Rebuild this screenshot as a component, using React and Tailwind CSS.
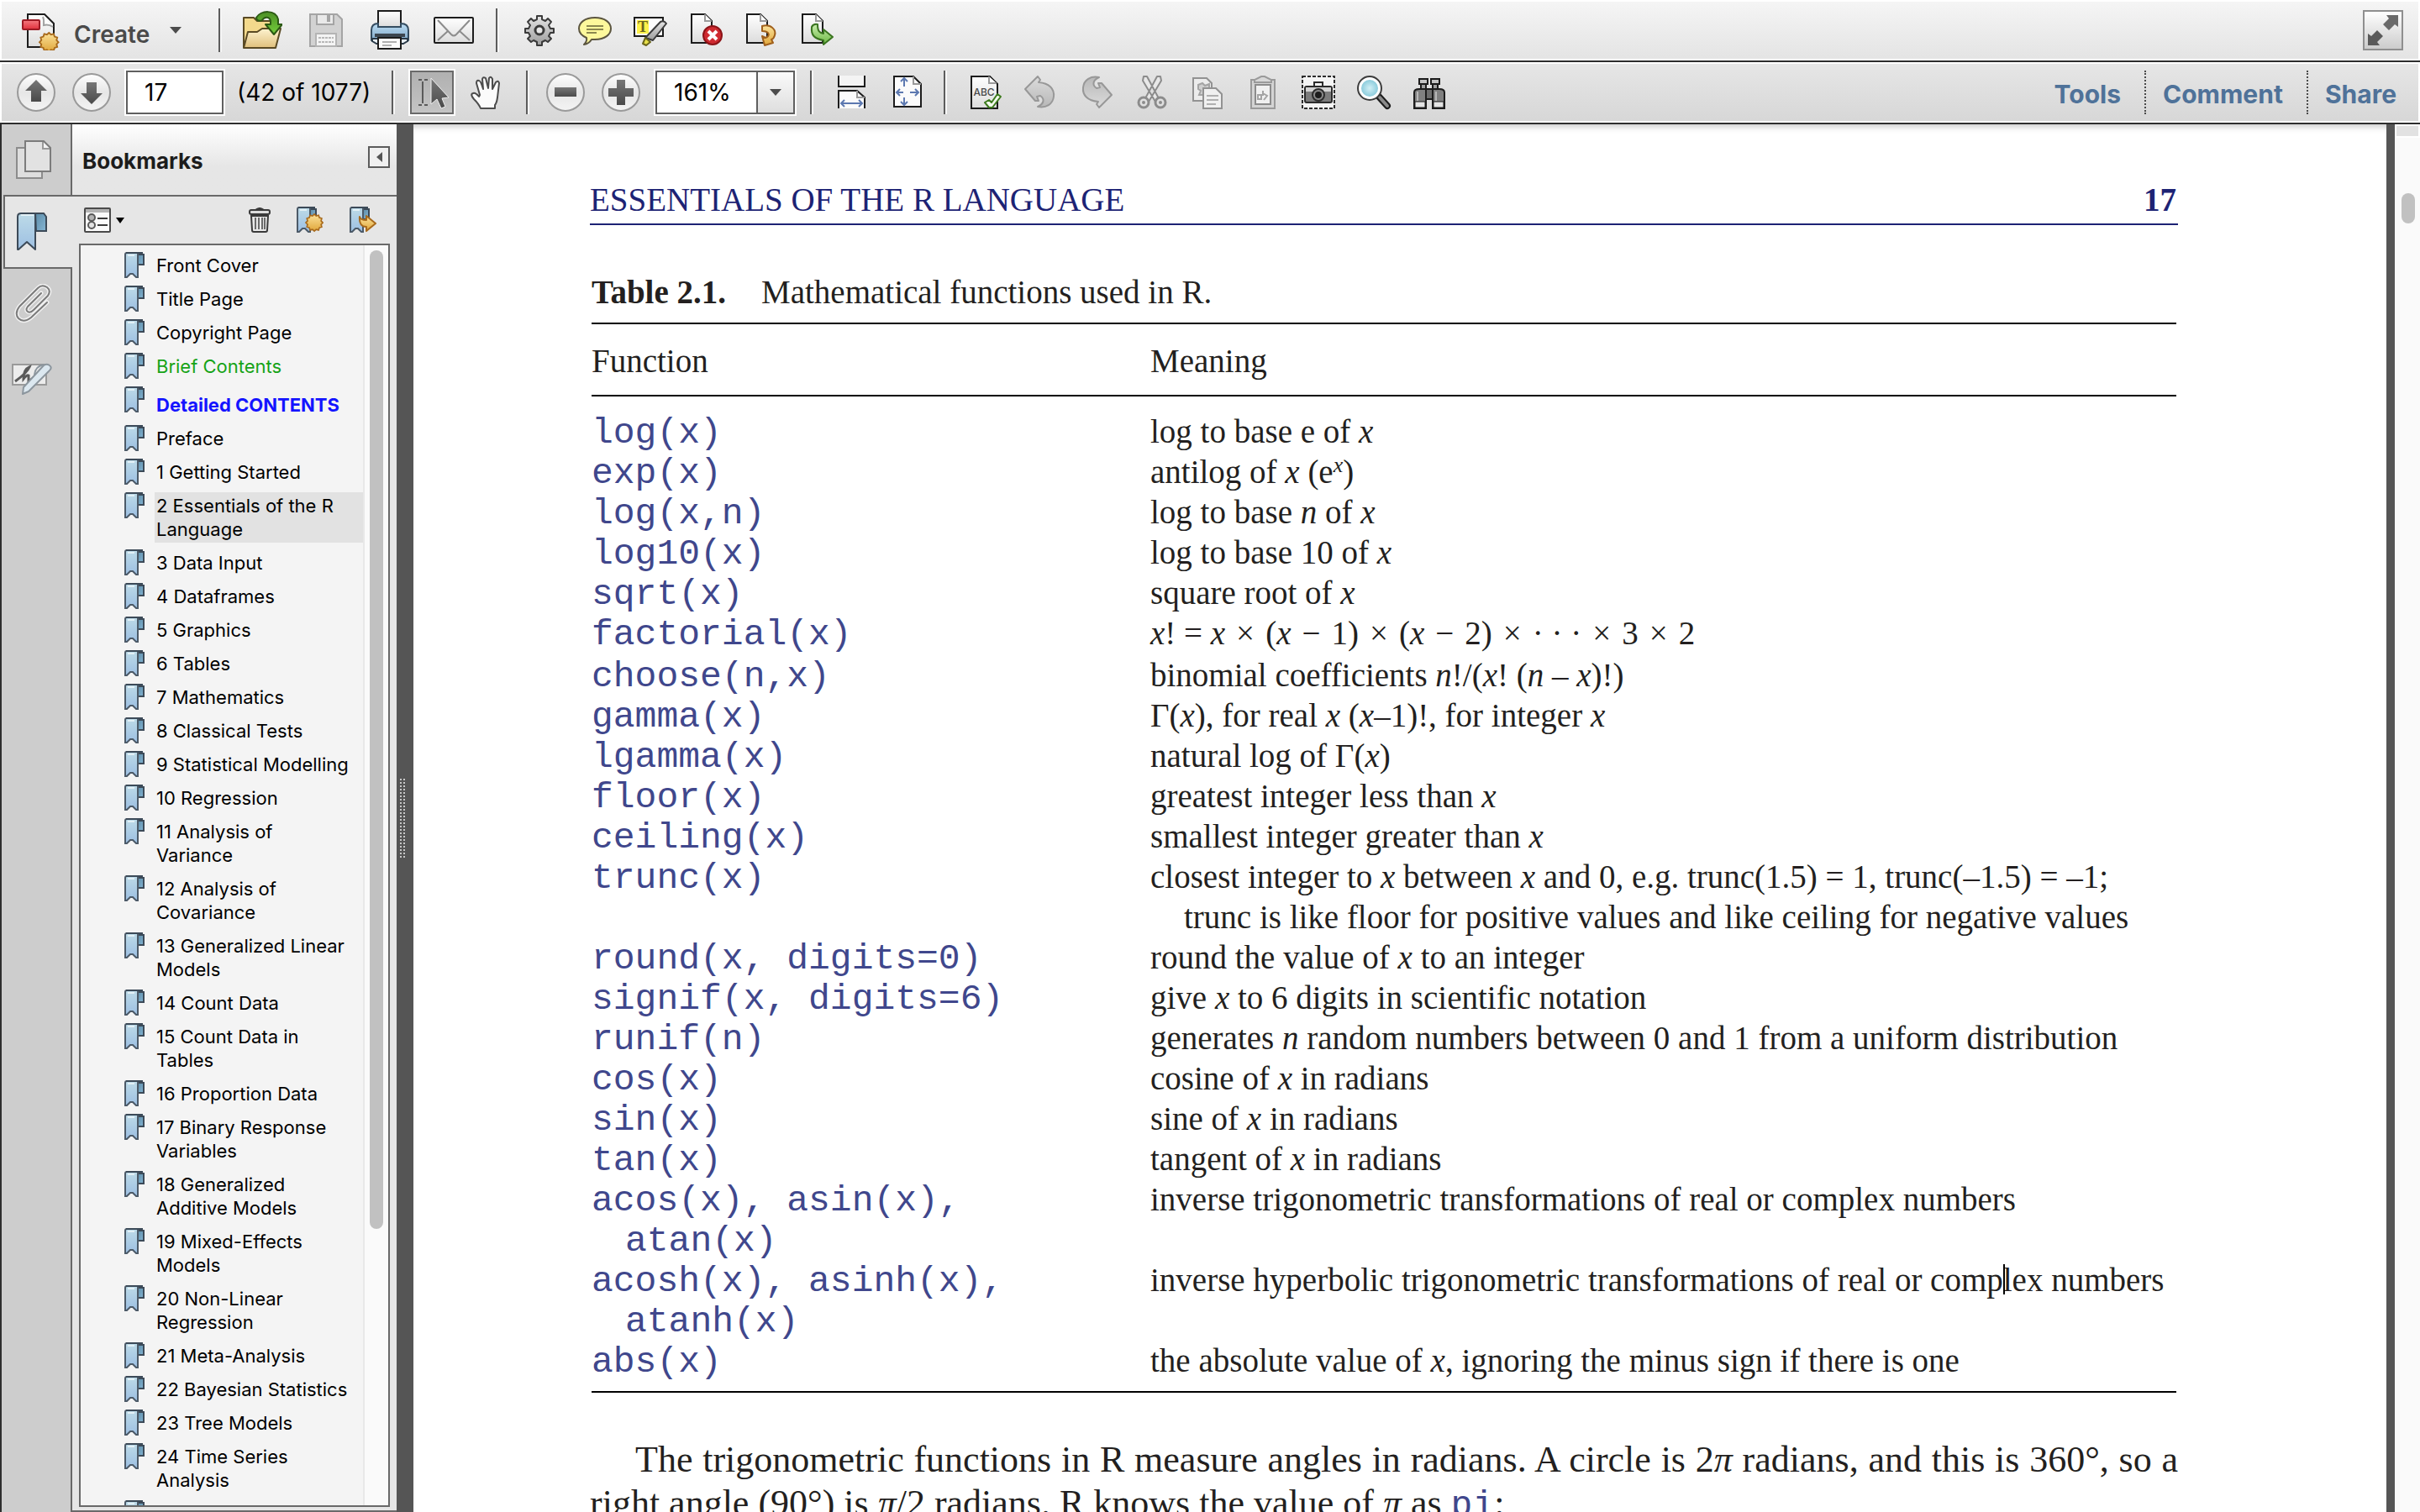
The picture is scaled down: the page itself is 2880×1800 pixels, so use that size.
import React from "react";

function Defs() {
  return (
    <svg width="0" height="0" className="absolute" aria-hidden="true">
      <defs>
        <linearGradient id="paper" x1="0" y1="0" x2="0" y2="1">
          <stop offset="0" stopColor="#ffffff" />
          <stop offset="1" stopColor="#dcdcdc" />
        </linearGradient>
        <linearGradient id="gold" x1="0" y1="0" x2="0" y2="1">
          <stop offset="0" stopColor="#fbe29a" />
          <stop offset="1" stopColor="#e0a63a" />
        </linearGradient>
        <linearGradient id="folder" x1="0" y1="0" x2="0" y2="1">
          <stop offset="0" stopColor="#fdf3d0" />
          <stop offset="1" stopColor="#e0c07c" />
        </linearGradient>
        <linearGradient id="green" x1="0" y1="0" x2="0" y2="1">
          <stop offset="0" stopColor="#4c8f24" />
          <stop offset="1" stopColor="#74cf3c" />
        </linearGradient>
        <linearGradient id="lime" x1="0" y1="0" x2="0" y2="1">
          <stop offset="0" stopColor="#c8ecae" />
          <stop offset="1" stopColor="#6cb842" />
        </linearGradient>
        <linearGradient id="blue" x1="0" y1="0" x2="0" y2="1">
          <stop offset="0" stopColor="#bddbe8" />
          <stop offset="1" stopColor="#9dbfe2" />
        </linearGradient>
        <linearGradient id="fold" x1="0" y1="0" x2="1" y2="1">
          <stop offset="0" stopColor="#5c8ca8" />
          <stop offset="1" stopColor="#86b6d4" />
        </linearGradient>
        <linearGradient id="knob" x1="0" y1="0" x2="0" y2="1">
          <stop offset="0" stopColor="#ffffff" />
          <stop offset="0.5" stopColor="#e6e6e6" />
          <stop offset="1" stopColor="#f4f4f4" />
        </linearGradient>
        <linearGradient id="ink" x1="0" y1="0" x2="0" y2="1">
          <stop offset="0" stopColor="#777777" />
          <stop offset="1" stopColor="#4a4a4a" />
        </linearGradient>
        <linearGradient id="steel" x1="0" y1="0" x2="0" y2="1">
          <stop offset="0" stopColor="#e4e4e4" />
          <stop offset="1" stopColor="#9c9c9c" />
        </linearGradient>
        <linearGradient id="mute" x1="0" y1="0" x2="0" y2="1">
          <stop offset="0" stopColor="#dcdcdc" />
          <stop offset="1" stopColor="#b8b8b8" />
        </linearGradient>
        <linearGradient id="ribbon" x1="0" y1="0" x2="0" y2="1">
          <stop offset="0" stopColor="#bcdcf2" />
          <stop offset="1" stopColor="#7ba4c6" />
        </linearGradient>
        <linearGradient id="red" x1="0" y1="0" x2="0" y2="1">
          <stop offset="0" stopColor="#f47a80" />
          <stop offset="1" stopColor="#e0303c" />
        </linearGradient>
        <radialGradient id="lens">
          <stop offset="0" stopColor="#d2f0f6" />
          <stop offset="1" stopColor="#8cccdc" />
        </radialGradient>
      </defs>
    </svg>
  );
}

function Icon({ children, size = 48 }) {
  return (
    <svg width={size} height={size} viewBox={`0 0 ${size} ${size}`} fill="none" aria-hidden="true" className="shrink-0">
      {children}
    </svg>
  );
}

const STAR =
  "M12 0l2.6 2.4 3.4-.9 1.1 3.4 3.4 1.1-.9 3.4L24 12l-2.4 2.6.9 3.4-3.4 1.1-1.1 3.4-3.4-.9L12 24l-2.6-2.4-3.4.9-1.1-3.4L1.5 18l.9-3.4L0 12l2.4-2.6L1.5 6l3.4-1.1L6 1.5l3.4.9z";

const SmallPage = () => (
  <>
    <path d="M7 5H23L31 13V39H7z" fill="url(#paper)" stroke="#1c1c1c" strokeWidth="2" />
    <path d="M23 5V13H31" fill="#fff" stroke="#9a9a9a" strokeWidth="2" />
  </>
);

const CreateIcon = () => (
  <Icon>
    <path d="M9 5H29L40 16V44H9z" fill="url(#paper)" stroke="#1c1c1c" strokeWidth="2" />
    <path d="M27 8C29 12 28 16 28 18C32 17 36 18 39 20" fill="#fff" stroke="#a0a0a0" strokeWidth="2" />
    <rect x="3" y="12" width="20" height="11" rx="1" fill="url(#red)" stroke="#9c1a24" strokeWidth="2" />
    <path transform="translate(23 27) scale(.94)" d={STAR} fill="url(#gold)" stroke="#a86a1c" strokeWidth="2" />
  </Icon>
);

const OpenIcon = () => (
  <Icon>
    <path d="M2 9H14L18 13H34V44H2z" fill="#f3d98c" stroke="#5a4a24" strokeWidth="2" strokeLinejoin="round" />
    <path d="M2 45L7 26H18L24 22H46L40 45z" fill="url(#folder)" stroke="#5a4a24" strokeWidth="2" strokeLinejoin="round" />
    <path d="M17 9C22 0 40 -1 43 11V17H48L38 29L28 17H34V13C33 8 27 7 24 12C21 14 17 12 17 9z" fill="url(#green)" stroke="#2c5a14" strokeWidth="2" strokeLinejoin="round" />
  </Icon>
);

const SaveIcon = () => (
  <Icon>
    <path d="M5 5H37L43 11V43H5z" fill="#d2d2d2" stroke="#a4a4a4" strokeWidth="2" />
    <path d="M13 5H33V17H13z" fill="#e9e9e9" stroke="#a4a4a4" strokeWidth="2" />
    <rect x="25" y="6" width="4" height="8" fill="#a4a4a4" />
    <path d="M12 43V28H36V43z" fill="#f4f4f4" stroke="#b4b4b4" strokeWidth="2" />
    <path d="M15 33H33M15 38H33" stroke="#b8b8b8" strokeWidth="2" strokeDasharray="3 1" />
  </Icon>
);

const PrintIcon = () => (
  <Icon>
    <path d="M10 1H37V20H10z" fill="url(#paper)" stroke="#1c1c1c" strokeWidth="2" />
    <path d="M2 36V24Q2 16 10 16V20H37V16Q46 16 46 24V36L42 38H6z" fill="url(#ribbon)" stroke="#344c60" strokeWidth="2" />
    <path d="M6 28H42V32H6z" fill="#3c4650" />
    <path d="M3 34H45V37L40 40H8L3 37z" fill="#e6eef4" stroke="#2a3a48" strokeWidth="2" />
    <path d="M10 33H37V46H10z" fill="#fbfbfb" stroke="#1c1c1c" strokeWidth="2" />
    <path d="M15 38H32M15 42H26" stroke="#b0b0b0" strokeWidth="2" />
  </Icon>
);

const MailIcon = () => (
  <Icon>
    <rect x="1" y="9" width="46" height="30" rx="1" fill="url(#paper)" stroke="#1c1c1c" strokeWidth="2" />
    <path d="M5 12L21 29Q24 32 27 29L43 12M5 36L17 25M43 36L31 25" stroke="#8c8c8c" strokeWidth="2" />
  </Icon>
);

const GearIcon = () => (
  <Icon>
    <path
      d="M21 7h6v4l4 2 3-3 4 4-3 4 2 4h4v5h-4l-2 4 3 3-4 4-3-2-4 2v4h-6v-4l-4-2-3 2-4-4 3-3-2-4H7v-5h4l2-4-3-4 4-4 3 3 4-2z"
      fill="url(#steel)" stroke="#3a3a3a" strokeWidth="2" strokeLinejoin="round"
    />
    <circle cx="24" cy="24" r="5" fill="#e8e8e8" stroke="#3a3a3a" strokeWidth="3" />
  </Icon>
);

const BubbleIcon = () => (
  <Icon>
    <path d="M24 9C36 9 43 15 43 22S36 35 24 35L20 35Q17 40 11 41Q15 37 14 33Q5 29 5 22C5 15 12 9 24 9z" fill="#fdf89c" stroke="#5c5640" strokeWidth="2" strokeLinejoin="round" />
    <path d="M14 19H34M14 23H34M14 27H26" stroke="#8c8850" strokeWidth="2" />
  </Icon>
);

const HighlightIcon = () => (
  <Icon>
    <rect x="5" y="9" width="34" height="22" fill="#fcfcfc" stroke="#1c1c1c" strokeWidth="2" />
    <rect x="8" y="12" width="14" height="16" fill="#fdf24a" />
    <text x="15" y="26" textAnchor="middle" fontFamily="Liberation Serif, serif" fontSize="18" fontWeight="bold" fill="#6a6420">T</text>
    <path d="M18 33L36 14Q40 12 43 16L27 36z" fill="url(#steel)" stroke="#3a3a3a" strokeWidth="2" strokeLinejoin="round" />
    <path d="M18 33L24 38L19 42L15 40z" fill="#e8e04a" stroke="#6c661c" strokeWidth="2" strokeLinejoin="round" />
  </Icon>
);

const DeletePageIcon = () => (
  <Icon>
    <SmallPage />
    <circle cx="32" cy="30" r="11" fill="#cf2a30" stroke="#8c1418" strokeWidth="2" />
    <path d="M27 25L37 35M37 25L27 35" stroke="#fff" strokeWidth="4" />
  </Icon>
);

const RotatePageIcon = () => (
  <Icon>
    <SmallPage />
    <path d="M25 19C36 16 42 24 40 30Q39 34 36 35L38 39L28 42L25 31L29 33C35 31 34 25 25 25z" fill="url(#gold)" stroke="#a0601c" strokeWidth="2" strokeLinejoin="round" />
  </Icon>
);

const ExportPageIcon = () => (
  <Icon>
    <SmallPage />
    <path d="M18 20C17 30 21 34 32 36V41L43 32L32 23V28C27 27 25 25 25 17Q20 16 18 20z" fill="url(#lime)" stroke="#3a7420" strokeWidth="2" strokeLinejoin="round" />
  </Icon>
);

const Knob = ({ children }) => (
  <Icon>
    <circle cx="24" cy="24" r="22" fill="url(#knob)" stroke="#9a9a9a" strokeWidth="2" />
    {children}
  </Icon>
);
const UpIcon = () => <Knob><path d="M24 9L37 22H30V35H18V22H11z" fill="url(#ink)" /></Knob>;
const DownIcon = () => <Knob><path d="M24 38L37 25H30V12H18V25H11z" fill="url(#ink)" /></Knob>;
const MinusIcon = () => <Knob><path d="M11 18H37V29H11z" fill="url(#ink)" /></Knob>;
const PlusIcon = () => <Knob><path d="M19 9H29V19H39V29H29V39H19V29H9V19H19z" fill="url(#ink)" /></Knob>;

const SelectIcon = () => (
  <Icon>
    <path d="M8 9H12M15 9H19M8 39H12M15 39H19M13 11V37" stroke="#5a5a5a" strokeWidth="2" />
    <path d="M23 7V38L30 32L35 43L40 41L36 31L44 30z" fill="url(#ink)" stroke="#f0f0f0" strokeWidth="1" />
  </Icon>
);

const HandIcon = () => (
  <Icon>
    <path
      d="M17 43Q15 38 9 32Q4 26 8 25Q11 24 15 29L16 27L12 13Q12 9 15 10Q17 10 20 20L19 8Q20 5 23 7L26 19L27 7Q29 4 31 8L31 20L35 12Q38 9 39 13L37 30Q36 37 34 39V43z"
      fill="#fbfbfb" stroke="#4c4c4c" strokeWidth="2" strokeLinejoin="round"
    />
  </Icon>
);

const FitWidthIcon = () => (
  <Icon>
    <path d="M8 4V17H39V4" fill="#f4f4f4" stroke="#1c1c1c" strokeWidth="2" />
    <path d="M8 43V22H30L39 30V43" fill="#fbfbfb" stroke="#1c1c1c" strokeWidth="2" />
    <path d="M30 22V30H39" stroke="#9a9a9a" strokeWidth="2" />
    <path d="M11 37H36M15 33L11 37L15 41M32 33L36 37L32 41" stroke="#5c78b0" strokeWidth="2" />
  </Icon>
);

const FitPageIcon = () => (
  <Icon>
    <path d="M8 5H31L40 14V41H8z" fill="#fbfbfb" stroke="#1c1c1c" strokeWidth="2" />
    <path d="M31 5V14H40" stroke="#9a9a9a" strokeWidth="2" />
    <path d="M20 7V17M20 30V39M16 11L20 7L24 11M16 35L20 39L24 35M11 24H19M27 24H37M15 20L11 24L15 28M33 20L37 24L33 28" stroke="#5c78b0" strokeWidth="2" />
  </Icon>
);

const SpellIcon = () => (
  <Icon>
    <path d="M7 5H29L38 14V43H7z" fill="url(#paper)" stroke="#1c1c1c" strokeWidth="2" />
    <path d="M28 5V13H37" fill="#fff" stroke="#9a9a9a" strokeWidth="2" />
    <text x="22" y="28" textAnchor="middle" fontFamily="Inter, sans-serif" fontSize="12" fontWeight="500" fill="#4a4a4a">ABC</text>
    <path d="M23 36L28 33L31 36L38 26L42 29L32 42H28z" fill="#f2faec" stroke="#3c7a1c" strokeWidth="2" strokeLinejoin="round" />
  </Icon>
);

const UNDO = "M5 20L20 5L23 9L21 12C34 13 40 20 39 29C38 38 30 43 20 41C27 38 29 32 23 28L19 29L21 34L17 34z";
const UndoIcon = () => (
  <Icon>
    <path d={UNDO} fill="url(#mute)" stroke="#989898" strokeWidth="2" strokeLinejoin="round" />
  </Icon>
);
const RedoIcon = () => (
  <Icon>
    <path transform="rotate(180 23.5 23.5)" d={UNDO} fill="url(#mute)" stroke="#989898" strokeWidth="2" strokeLinejoin="round" />
  </Icon>
);

const CutIcon = () => (
  <Icon>
    <path d="M14 5H18L33 33L28 35L13 10zM34 5H30L15 33L20 35L35 10z" fill="#e8e8e8" stroke="#8c8c8c" strokeWidth="2" strokeLinejoin="round" />
    <circle cx="14" cy="36" r="6" fill="#e0e0e0" stroke="#8c8c8c" strokeWidth="3" />
    <circle cx="34" cy="36" r="6" fill="#e0e0e0" stroke="#8c8c8c" strokeWidth="3" />
    <circle cx="14" cy="36" r="2" fill="#8c8c8c" />
    <circle cx="34" cy="36" r="2" fill="#8c8c8c" />
  </Icon>
);

const CopyIcon = () => (
  <Icon>
    <path d="M7 7H23L29 13V34H7z" fill="#ececec" stroke="#929292" strokeWidth="2" />
    <path d="M13 15L18 13L21 16L26 14V20L23 22L26 27H14L16 22L13 20z" fill="#cfcfcf" stroke="#a4a4a4" strokeWidth="2" />
    <path d="M19 19H34L41 26V43H19z" fill="#f0f0f0" stroke="#929292" strokeWidth="2" />
    <path d="M23 28H37M23 33H37M23 38H34" stroke="#b0b0b0" strokeWidth="2" />
  </Icon>
);

const PasteIcon = () => (
  <Icon>
    <rect x="10" y="9" width="28" height="34" fill="#d4d4d4" stroke="#9a9a9a" strokeWidth="2" />
    <path d="M14 12V9L22 5H26L34 9V12z" fill="#d8d8d8" stroke="#9a9a9a" strokeWidth="2" />
    <rect x="15" y="15" width="18" height="23" fill="#f0f0f0" stroke="#8c8c8c" strokeWidth="2" />
    <path d="M18 27H22V32H18zM24 22V28M24 25L29 28L25 33" stroke="#a4a4a4" strokeWidth="2" />
  </Icon>
);

const CameraIcon = () => (
  <Icon>
    <rect x="5" y="5" width="38" height="38" fill="#f4f4f4" stroke="#2c2c2c" strokeWidth="2" strokeDasharray="4 2" />
    <path d="M19 16V12H29V16" stroke="#2c2c2c" strokeWidth="2" />
    <rect x="8" y="17" width="32" height="19" rx="2" fill="#7c7c7c" stroke="#2c2c2c" strokeWidth="2" />
    <path d="M9 18H39V23H9z" fill="#d4d4d4" />
    <circle cx="24" cy="27" r="7" fill="#8c8c8c" stroke="#2c2c2c" strokeWidth="2" />
    <circle cx="24" cy="27" r="4" fill="#1c1c1c" />
  </Icon>
);

const MagnifierIcon = () => (
  <Icon>
    <path d="M30 29L40 40" stroke="#1c1c1c" strokeWidth="8" strokeLinecap="round" />
    <path d="M31 30L40 40" stroke="#8a8a8a" strokeWidth="4" strokeLinecap="round" />
    <circle cx="19" cy="19" r="14" fill="#fff" stroke="#3c3c3c" strokeWidth="2" />
    <circle cx="19" cy="19" r="10" fill="url(#lens)" />
  </Icon>
);

const BinocularsIcon = () => (
  <Icon>
    <path d="M12 8H22V14H12zM26 8H36V14H26z" fill="#c4c4c4" stroke="#1c1c1c" strokeWidth="2" />
    <path d="M14 14H20V20H14zM28 14H34V20H28z" fill="#a0a0a0" stroke="#1c1c1c" strokeWidth="2" />
    <rect x="19" y="20" width="10" height="12" fill="#6c6c6c" stroke="#1c1c1c" strokeWidth="2" />
    <path d="M6 24Q6 20 12 20H20V43H6zM42 24Q42 20 36 20H28V43H42z" fill="#808080" stroke="#1c1c1c" strokeWidth="2" />
    <path d="M7 35H19V42H7zM29 35H41V42H29z" fill="#e4e4e4" stroke="#1c1c1c" strokeWidth="1" />
    <path d="M10 23V34M32 23V34" stroke="#b8b8b8" strokeWidth="2" />
  </Icon>
);

const ExpandIcon = () => (
  <Icon>
    <path d="M42 6V20L38 17L31 24L24 17L31 10L28 6z" fill="#6a6a6a" />
    <path d="M6 42V28L10 31L17 24L24 31L17 38L20 42z" fill="#5a5a5a" />
  </Icon>
);

function Caret({ className }) {
  return (
    <svg width="14" height="8" viewBox="0 0 14 8" className={className} aria-hidden="true">
      <path d="M0 0H14L7 8z" fill="currentColor" />
    </svg>
  );
}

const BookmarkGlyph = ({ children, width = 24 }) => (
  <svg width={width} height="32" viewBox={`0 0 ${width} 32`} fill="none" aria-hidden="true" className="shrink-0">
    <path d="M16 3H23V15H16z" fill="url(#fold)" stroke="#3c4a58" strokeWidth="2" />
    <path d="M1 3Q1 1 3 1H16V30H14L10 26H7L3 30H1z" fill="url(#blue)" stroke="#4c5a68" strokeWidth="2" />
    <path d="M2 1H22" stroke="#3c4a58" strokeWidth="2" />
    <path d="M4 4H12" stroke="#e2f0f6" strokeWidth="2" />
    {children}
  </svg>
);

const BigBookmark = () => (
  <svg width="36" height="48" viewBox="0 0 36 48" fill="none" aria-hidden="true">
    <path d="M22 2H32L35 6V23H23z" fill="url(#fold)" stroke="#3c4a58" strokeWidth="2" />
    <path d="M1 6Q1 2 5 2H22V45L12 36L2 45H1z" fill="url(#blue)" stroke="#3c4a58" strokeWidth="2" strokeLinejoin="round" />
    <path d="M5 4H20" stroke="#e2f0f6" strokeWidth="2" />
  </svg>
);

const PagesIcon = () => (
  <Icon>
    <path d="M4 10H34V46H4z" fill="#dedede" stroke="#8c8c8c" strokeWidth="2" />
    <path d="M14 2H36L44 10V38H14z" fill="#e2e2e2" stroke="#7c7c7c" strokeWidth="2" />
    <path d="M35 3V11H43" fill="#f4f4f4" stroke="#9a9a9a" strokeWidth="2" />
  </Icon>
);

const CLIP = "M33 11L17 27Q14 31 17 33Q20 35 24 31L41 14Q45 8 40 4Q34 0 29 5L7 27Q1 35 6 41Q12 47 21 40L40 22";
const ClipIcon = () => (
  <Icon>
    <path d={CLIP} stroke="#f0f0f0" strokeWidth="5" strokeLinecap="round" />
    <path d={CLIP} stroke="#7a7a7a" strokeWidth="2" strokeLinecap="round" />
  </Icon>
);

const SignIcon = () => (
  <Icon>
    <rect x="1" y="6" width="40" height="24" fill="#ececec" stroke="#9a9a9a" strokeWidth="2" />
    <path d="M4 26Q18 16 21 9Q14 12 14 23Q18 18 20 19L20 26L27 21" stroke="#5a5a5a" strokeWidth="3" />
    <path d="M14 33L38 7Q43 4 46 8Q48 11 44 14L20 38L13 41z" fill="#dce8f0" stroke="#8c969e" strokeWidth="2" strokeLinejoin="round" />
    <path d="M27 18Q28 8 38 6" stroke="#8c969e" strokeWidth="2" />
  </Icon>
);

const OptionsIcon = () => (
  <svg width="32" height="30" viewBox="0 0 32 30" fill="none" aria-hidden="true">
    <rect x="1" y="1" width="30" height="28" rx="1" fill="#fafafa" stroke="#4a4a4a" strokeWidth="2" />
    <path d="M2 4H30" stroke="#b4b4b4" strokeWidth="4" />
    <circle cx="9" cy="12" r="4" fill="#b4b4b4" stroke="#5a5a5a" strokeWidth="2" />
    <circle cx="9" cy="21" r="4" fill="#e4e4e4" stroke="#5a5a5a" strokeWidth="2" />
    <path d="M16 13H28M16 21H28" stroke="#3a3a3a" strokeWidth="2" />
  </svg>
);

const TrashIcon = () => (
  <svg width="26" height="30" viewBox="0 0 26 30" fill="none" aria-hidden="true">
    <path d="M8 3Q13 -1 18 3" stroke="#3a3a3a" strokeWidth="2" />
    <rect x="1" y="3" width="24" height="5" rx="2" fill="#dcdcdc" stroke="#3a3a3a" strokeWidth="2" />
    <path d="M3 10H23L22 27Q22 29 20 29H6Q4 29 4 27z" fill="#e8e8e8" stroke="#3a3a3a" strokeWidth="2" />
    <path d="M8 12V26M12 12V26M16 12V26M19 12V26" stroke="#6a6a6a" strokeWidth="2" />
  </svg>
);

function Tool({ label, icon, wide }) {
  return (
    <button type="button" aria-label={label} className={wide ? "flex w-[76px] items-center justify-center" : "flex w-[66px] items-center justify-center"}>
      {icon}
    </button>
  );
}

const Divider = () => <div className="h-[52px] w-[4px] shrink-0 border-l-2 border-r-2 border-l-[#5c5c5c] border-r-[#f6f6f6]" />;

const fileTools = [
  ["Open", <OpenIcon />],
  ["Save", <SaveIcon />],
  ["Print", <PrintIcon />],
  ["Email", <MailIcon />],
];
const quickTools = [
  ["Preferences", <GearIcon />],
  ["Add note", <BubbleIcon />],
  ["Highlight text", <HighlightIcon />],
  ["Delete page", <DeletePageIcon />],
  ["Rotate page", <RotatePageIcon />],
  ["Export page", <ExportPageIcon />],
];
const editTools = [
  ["Check spelling", <SpellIcon />],
  ["Undo", <UndoIcon />],
  ["Redo", <RedoIcon />],
  ["Cut", <CutIcon />],
  ["Copy", <CopyIcon />],
  ["Paste", <PasteIcon />],
  ["Snapshot", <CameraIcon />],
  ["Loupe", <MagnifierIcon />],
  ["Find", <BinocularsIcon />],
];

function FileBar() {
  return (
    <div className="flex h-[74px] shrink-0 items-center border-b-2 border-[#2e2e2e] bg-white p-[2px]">
      <div className="flex h-full flex-1 items-center bg-linear-to-b from-[#f5f5f5] to-[#e4e4e4]">
        <button type="button" className="flex items-center pl-[22px] text-[28px] font-semibold text-[#4a4a4a]">
          <CreateIcon />
          <span className="ml-4 pt-[10px] leading-[32px]">Create</span>
          <Caret className="ml-6 text-[#4c4c4c]" />
        </button>
        <div className="ml-[44px] flex items-center">
          <Divider />
          <div className="ml-[10px] flex">
            {fileTools.map(([label, icon]) => <Tool key={label} label={label} icon={icon} wide />)}
          </div>
          <div className="ml-[12px] flex items-center">
            <Divider />
            <div className="ml-[15px] flex">
              {quickTools.map(([label, icon]) => <Tool key={label} label={label} icon={icon} />)}
            </div>
          </div>
        </div>
        <button type="button" aria-label="Full screen" className="mr-[18px] ml-auto flex size-12 items-center justify-center border-2 border-[#8f8f8f] bg-linear-to-b from-white to-[#cccccc]">
          <ExpandIcon />
        </button>
      </div>
    </div>
  );
}

function NavBar() {
  return (
    <div className="flex h-[74px] shrink-0 border-b-2 border-[#2e2e2e] bg-white p-[2px]">
      <div className="flex flex-1 items-center bg-linear-to-b from-[#e6e6e6] to-[#d7d7d7] pl-[8px] text-[28px]">
        <Tool label="Previous page" icon={<UpIcon />} />
        <Tool label="Next page" icon={<DownIcon />} />
        <input aria-label="Page number" defaultValue="17" className="ml-[8px] h-[52px] w-[116px] border-2 border-[#5f5f5f] bg-white pl-[20px] text-black outline-2 outline-white" />
        <span className="ml-[16px] w-[184px] whitespace-nowrap text-black">(42 of 1077)</span>
        <Divider />
        <button type="button" aria-label="Select" aria-pressed="true" className="ml-[18px] flex h-[52px] w-[52px] items-center justify-center border-2 border-[#6a6a6a] bg-linear-to-b from-[#b0b0b0] to-[#c4c4c4] outline-2 outline-white">
          <SelectIcon />
        </button>
        <div className="ml-[6px] flex">
          <Tool label="Hand" icon={<HandIcon />} />
        </div>
        <div className="ml-[14px] flex items-center">
          <Divider />
          <div className="ml-[10px] flex">
            <Tool label="Zoom out" icon={<MinusIcon />} />
            <Tool label="Zoom in" icon={<PlusIcon />} />
          </div>
        </div>
        <div className="ml-[8px] flex h-[52px] w-[166px] border-2 border-[#5f5f5f] bg-white outline-2 outline-white">
          <input aria-label="Zoom" defaultValue="161%" className="w-0 flex-1 pl-[20px] text-black" />
          <button type="button" aria-label="Zoom levels" className="flex w-[44px] items-center justify-center border-l-2 border-[#5f5f5f] bg-linear-to-b from-[#fafafa] to-[#dedede] text-[#4c4c4c]">
            <Caret />
          </button>
        </div>
        <div className="ml-[18px] flex items-center">
          <Divider />
          <div className="ml-[13px] flex">
            <Tool label="Fit width" icon={<FitWidthIcon />} />
            <Tool label="Fit page" icon={<FitPageIcon />} />
          </div>
        </div>
        <div className="ml-[10px] flex items-center">
          <Divider />
          <div className="ml-[13px] flex">
            {editTools.map(([label, icon]) => <Tool key={label} label={label} icon={icon} />)}
          </div>
        </div>
        <nav className="ml-auto flex items-center pr-[26px] text-[30px] leading-[40px] font-bold text-[#4f7299]">
          <button type="button" className="pt-[8px] pr-[28px] pb-[4px]">Tools</button>
          <button type="button" className="border-l-2 border-dotted border-[#4a4a4a] pt-[8px] pr-[28px] pb-[4px] pl-[20px]">Comment</button>
          <button type="button" className="border-l-2 border-dotted border-[#4a4a4a] pt-[8px] pb-[4px] pl-[20px]">Share</button>
        </nav>
      </div>
    </div>
  );
}

const bookmarks = [
  { t: "Front Cover" },
  { t: "Title Page" },
  { t: "Copyright Page" },
  { t: "Brief Contents", kind: "green" },
  { t: "Detailed CONTENTS", kind: "blue" },
  { t: "Preface" },
  { t: "1 Getting Started" },
  { t: "2 Essentials of the R Language", kind: "active" },
  { t: "3 Data Input" },
  { t: "4 Dataframes" },
  { t: "5 Graphics" },
  { t: "6 Tables" },
  { t: "7 Mathematics" },
  { t: "8 Classical Tests" },
  { t: "9 Statistical Modelling" },
  { t: "10 Regression" },
  { t: "11 Analysis of Variance" },
  { t: "12 Analysis of Covariance" },
  { t: "13 Generalized Linear Models" },
  { t: "14 Count Data" },
  { t: "15 Count Data in Tables" },
  { t: "16 Proportion Data" },
  { t: "17 Binary Response Variables" },
  { t: "18 Generalized Additive Models" },
  { t: "19 Mixed-Effects Models" },
  { t: "20 Non-Linear Regression" },
  { t: "21 Meta-Analysis" },
  { t: "22 Bayesian Statistics" },
  { t: "23 Tree Models" },
  { t: "24 Time Series Analysis" },
];

const linkStyles = {
  green: "text-[#16a316] py-[2px]",
  blue: "text-[#1414ff] font-bold pt-[8px] pb-[2px]",
  active: "text-black bg-[#e2e2e2] py-[2px]",
};

function Strip() {
  return (
    <div className="flex w-[86px] shrink-0 flex-col border-l-2 border-[#2e2e2e] bg-[#cdcdcd]">
      <button type="button" aria-label="Page thumbnails" className="flex h-[84px] items-center border-r-2 border-[#696969] pl-[14px]">
        <PagesIcon />
      </button>
      <button type="button" aria-label="Bookmarks" aria-pressed="true" className="ml-[2px] flex h-[88px] items-center border-2 border-r-0 border-[#696969] bg-[#e6e6e6] pl-[14px]">
        <BigBookmark />
      </button>
      <div className="flex flex-1 flex-col items-start gap-[42px] border-r-2 border-[#696969] pt-[18px] pl-[12px]">
        <button type="button" aria-label="Attachments" className="pl-[2px]"><ClipIcon /></button>
        <button type="button" aria-label="Signatures"><SignIcon /></button>
      </div>
    </div>
  );
}

function Bookmarks() {
  return (
    <aside className="flex w-[386px] shrink-0 flex-col border-b-2 border-[#696969] bg-[#e6e6e6]">
      <header className="flex h-[86px] shrink-0 items-start justify-between border-b-2 border-[#696969] bg-linear-to-b from-white to-[#e6e6e6] to-60% pt-[26px] pr-[8px] pl-[12px]">
        <h2 className="pt-[2px] text-[26px] leading-[32px] font-bold text-[#1c1c1c]">Bookmarks</h2>
        <button type="button" aria-label="Collapse" className="flex size-[26px] items-center justify-center border-2 border-[#5c5c5c] bg-[#f0f0f0]">
          <svg width="8" height="12" viewBox="0 0 8 12" aria-hidden="true"><path d="M8 0V12L1 6z" fill="#555" /></svg>
        </button>
      </header>
      <div className="flex h-[56px] shrink-0 items-center pr-[24px] pl-[14px]">
        <button type="button" aria-label="Options" className="flex items-center gap-[6px] text-black">
          <OptionsIcon />
          <svg width="10" height="7" viewBox="0 0 10 7" aria-hidden="true"><path d="M0 0H10L5 7z" /></svg>
        </button>
        <div className="ml-auto flex items-center gap-[31px]">
          <button type="button" aria-label="Delete bookmark"><TrashIcon /></button>
          <button type="button" aria-label="New bookmark">
            <BookmarkGlyph width={32}>
              <path transform="translate(11 9) scale(.84)" d={STAR} fill="url(#gold)" stroke="#a86a1c" strokeWidth="2" />
            </BookmarkGlyph>
          </button>
          <button type="button" aria-label="Expand current bookmark">
            <BookmarkGlyph width={32}>
              <path d="M12 12Q13 16 20 16V11L31 20L20 29V24Q11 24 12 12z" fill="url(#gold)" stroke="#a86a1c" strokeWidth="2" strokeLinejoin="round" />
            </BookmarkGlyph>
          </button>
        </div>
      </div>
      <div className="mr-[8px] mb-[4px] ml-[8px] flex min-h-0 flex-1 border-2 border-[#696969] bg-[#f4f4f4]">
        <ul className="flex min-w-0 flex-1 flex-col gap-[8px] overflow-hidden pt-[8px] pl-[52px]">
          {bookmarks.map(({ t, kind }) => (
            <li key={t} className="flex shrink-0 items-start gap-[12px]">
              <BookmarkGlyph />
              <a href="#" className={`flex-1 pl-[2px] pr-[14px] text-[22px] leading-[28px] ${linkStyles[kind] || "text-black py-[2px]"}`}>{t}</a>
            </li>
          ))}
          <li className="flex shrink-0 items-start">
            <a href="#" aria-label="Next chapter"><BookmarkGlyph /></a>
          </li>
        </ul>
        <div className="w-[30px] shrink-0 border-l-2 border-[#e8e8e8] bg-[#fafafa] pt-[6px] pl-[6px]">
          <div className="h-[78%] w-[16px] rounded-full bg-[#c1c1c1]" />
        </div>
      </div>
    </aside>
  );
}

const X = () => <i>x</i>;
const N = () => <i>n</i>;

const rows = [
  ["log(x)", <>log to base e of <X /></>],
  ["exp(x)", <>antilog of <X /> (e<sup className="text-[26px] leading-none"><X /></sup>)</>],
  ["log(x,n)", <>log to base <N /> of <X /></>],
  ["log10(x)", <>log to base 10 of <X /></>],
  ["sqrt(x)", <>square root of <X /></>],
  ["factorial(x)", <span className="block pb-[2px]"><X />! = <X />{" \u200a×\u200a "}(<X />{" \u200a−\u200a "}1){" \u200a×\u200a "}(<X />{" \u200a−\u200a "}2){" \u200a×\u200a · · · \u200a×\u200a "}3{" \u200a×\u200a "}2</span>],
  ["choose(n,x)", <>binomial coefficients <N />!/(<X />! (<N /> – <X />)!)</>],
  ["gamma(x)", <>Γ(<X />), for real <X /> (<X />–1)!, for integer <X /></>],
  ["lgamma(x)", <>natural log of Γ(<X />)</>],
  ["floor(x)", <>greatest integer less than <X /></>],
  ["ceiling(x)", <>smallest integer greater than <X /></>],
  ["trunc(x)", <>closest integer to <X /> between <X /> and 0, e.g. trunc(1.5) = 1, trunc(–1.5) = –1;<span className="block pl-10">trunc is like floor for positive values and like ceiling for negative values</span></>],
  ["round(x, digits=0)", <>round the value of <X /> to an integer</>],
  ["signif(x, digits=6)", <>give <X /> to 6 digits in scientific notation</>],
  ["runif(n)", <>generates <N /> random numbers between 0 and 1 from a uniform distribution</>],
  ["cos(x)", <>cosine of <X /> in radians</>],
  ["sin(x)", <>sine of <X /> in radians</>],
  ["tan(x)", <>tangent of <X /> in radians</>],
  ["acos(x), asin(x),", <>inverse trigonometric transformations of real or complex numbers</>, "atan(x)"],
  [
    "acosh(x), asinh(x),",
    <>inverse hyperbolic trigonometric transformations of real or comp<span className="relative"><span className="absolute top-[3px] left-0 h-[36px] w-[2px] bg-black" /></span>lex numbers</>,
    "atanh(x)",
  ],
  ["abs(x)", <>the absolute value of <X />, ignoring the minus sign if there is one</>],
];

function Code({ children }) {
  return <code className="font-['Liberation_Mono',monospace] text-[43px] leading-none whitespace-pre text-[#40478c]">{children}</code>;
}

function Page() {
  return (
    <main className="min-w-0 flex-1 overflow-hidden bg-white pr-[248px] pl-[210px] font-['Liberation_Serif',serif] text-[39px] leading-[48px] text-[#231f20] shadow-[inset_0_8px_8px_-6px_rgba(0,0,0,0.25)]">
      <header className="mt-[66px] flex justify-between border-b-2 border-[#1d2374] pb-[4px] text-[#1d2374]">
        <h1>ESSENTIALS OF THE R LANGUAGE</h1>
        <b className="pr-[2px]">17</b>
      </header>
      <div className="px-[2px] pt-[56px]">
        <table className="w-full table-fixed border-collapse text-left">
          <caption className="pb-[12px] text-left whitespace-nowrap">
            <b className="mr-[42px]">Table 2.1.</b>Mathematical functions used in R.
          </caption>
          <thead className="border-y-2 border-black">
            <tr>
              <th className="w-[665px] pt-[20px] pb-[16px] font-normal">Function</th>
              <th className="pt-[20px] pb-[16px] font-normal">Meaning</th>
            </tr>
          </thead>
          <tbody className="border-b-2 border-black before:block before:h-[18px] after:block after:h-[12px]">
            {rows.map(([fn, meaning, more]) => (
              <tr key={fn} className="align-top">
                <td className="whitespace-nowrap">
                  <Code>{fn}</Code>
                  {more && <span className="block pl-10"><Code>{more}</Code></span>}
                </td>
                <td className="whitespace-nowrap">{meaning}</td>
              </tr>
            ))}
          </tbody>
        </table>
      </div>
      <p className="mt-[54px] text-justify indent-[54px] text-[44px] leading-[52px]">
        The trigonometric functions in R measure angles in radians. A circle is 2<i>π</i> radians, and this is 360°, so a
        right angle (90°) is <i>π</i>/2 radians. R knows the value of <i>π</i> as <Code>pi</Code>:
      </p>
    </main>
  );
}

export default function App() {
  return (
    <div className="flex h-screen flex-col overflow-hidden bg-[#555555] font-['Inter','Liberation_Sans',sans-serif]">
      <Defs />
      <FileBar />
      <NavBar />
      <div className="flex min-h-0 flex-1">
        <Strip />
        <Bookmarks />
        <div className="flex w-[20px] shrink-0 items-center justify-start bg-[#555555] pl-[4px]">
          <svg width="6" height="94" aria-hidden="true">
            <path d="M1 0V94M5 0V94" stroke="#c8c8c8" strokeWidth="2" strokeDasharray="2 2" />
          </svg>
        </div>
        <Page />
        <div className="ml-[10px] flex w-[30px] shrink-0 flex-col bg-[#fafafa]">
          <div className="h-[16px] border-2 border-white bg-[#e2e2e2]" />
          <div className="mt-[66px] ml-[8px] h-[36px] w-[16px] rounded-full bg-[#c1c1c1]" />
        </div>
      </div>
    </div>
  );
}
